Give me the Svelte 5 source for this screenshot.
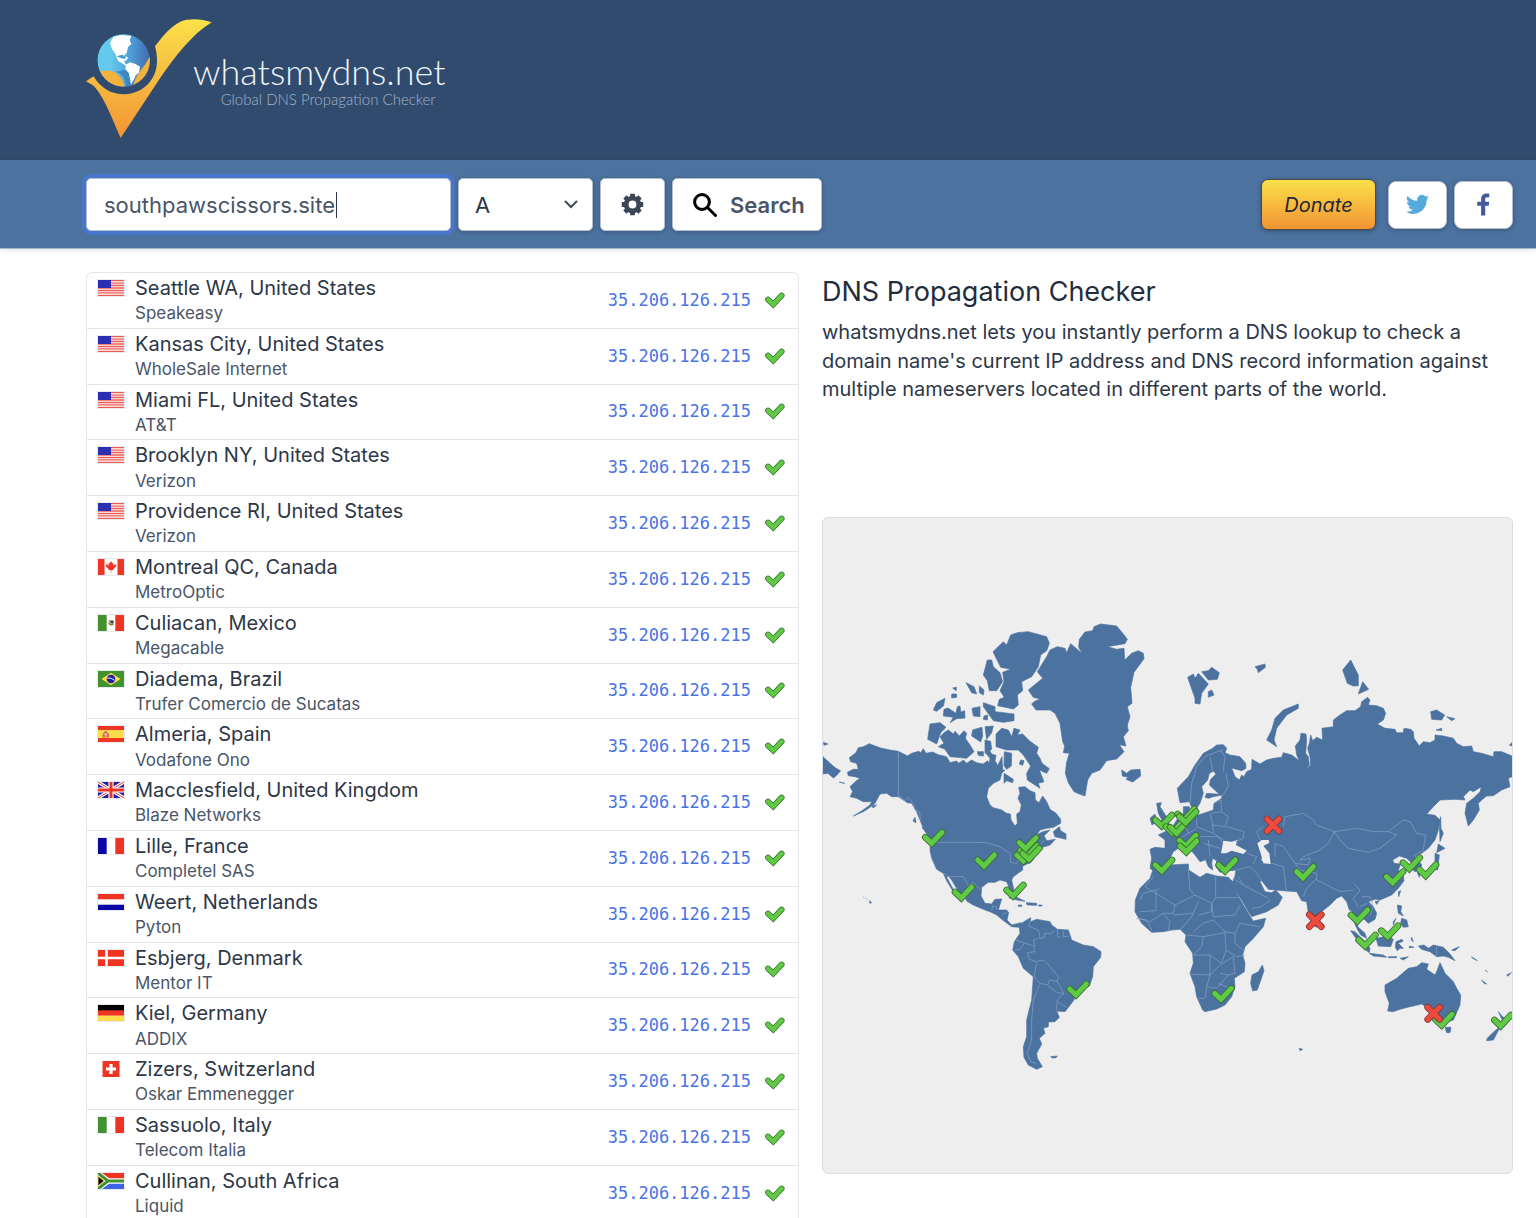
<script>
  const ip = '35.206.126.215';
  const servers = [
    ['us', 'Seattle WA, United States', 'Speakeasy'],
    ['us', 'Kansas City, United States', 'WholeSale Internet'],
    ['us', 'Miami FL, United States', 'AT&T'],
    ['us', 'Brooklyn NY, United States', 'Verizon'],
    ['us', 'Providence RI, United States', 'Verizon'],
    ['ca', 'Montreal QC, Canada', 'MetroOptic'],
    ['mx', 'Culiacan, Mexico', 'Megacable'],
    ['br', 'Diadema, Brazil', 'Trufer Comercio de Sucatas'],
    ['es', 'Almeria, Spain', 'Vodafone Ono'],
    ['gb', 'Macclesfield, United Kingdom', 'Blaze Networks'],
    ['fr', 'Lille, France', 'Completel SAS'],
    ['nl', 'Weert, Netherlands', 'Pyton'],
    ['dk', 'Esbjerg, Denmark', 'Mentor IT'],
    ['de', 'Kiel, Germany', 'ADDIX'],
    ['ch', 'Zizers, Switzerland', 'Oskar Emmenegger'],
    ['it', 'Sassuolo, Italy', 'Telecom Italia'],
    ['za', 'Cullinan, South Africa', 'Liquid']
  ];
  const ticks = [
    [335, 702], [492, 770], [424, 866], [579, 860], [610, 755], [620, 742], [627, 750], [617, 718], [768, 1157],
    [1025, 650], [1057, 670], [1070, 672], [1092, 632], [1097, 640], [1097, 711], [1099, 728], [1025, 785],
    [1215, 785], [1449, 805], [1718, 820], [1768, 778], [1817, 799], [1612, 935], [1703, 982], [1635, 1010],
    [1203, 1170], [1865, 1248], [2042, 1250]
  ];
  const crosses = [[1359, 645], [1486, 932], [1841, 1210]];
  let domain = $state('southpawscissors.site');
</script>

{#snippet flag(code)}
  <svg class="flag" class:square={code === 'ch'} viewBox="0 0 26 16" aria-hidden="true">
    {#if code === 'us'}
      <path fill="#fff" d="M0 0h26v16H0z" />
      <path stroke="#ee5a50" stroke-width="1.3" d="M0 .6h26M0 3.1h26M0 5.5h26M0 8h26M0 10.5h26M0 12.9h26M0 15.4h26" />
      <path fill="#2b2fb0" d="M0 0h13v8H0z" />
    {:else if code === 'ca'}
      <path fill="#fff" d="M0 0h26v16H0z" />
      <path fill="#ee3524" d="M0 0h6.500v16H0zM19.500 0H26v16h-6.500zM13 2l1.300 2.300 1.200-.5-.4 3 1.700-1.500 1.700.6-.5 1.700-2.800 2.700.3 1-2.200-.3v2.500h-.6V11l-2.200.3.3-1L8 7.600l-.5-1.700 1.700-.6 1.700 1.500-.4-3 1.200.5z" />
    {:else if code === 'mx'}
      <path fill="#fff" d="M0 0h26v16H0z" />
      <path fill="#42922f" d="M0 0h8.700v16H0z" /><path fill="#ee3524" d="M17.300 0H26v16h-8.700z" />
      <path fill="none" stroke="#8a7440" stroke-width="1.500" d="M10.500 7.500q2 4 5 1.200M11 5.500l3 2" />
      <circle cx="14" cy="7" r="1.800" fill="#4b4438" />
    {:else if code === 'br'}
      <path fill="#42922f" d="M0 0h26v16H0z" /><path fill="#f9dc4a" d="M13 1.800 22.500 8 13 14.200 3.500 8z" />
      <circle cx="13" cy="8" r="4.300" fill="#1d23a8" /><path fill="none" stroke="#dfe3f4" d="M9 7q4-.8 7.500 2.300" />
    {:else if code === 'es'}
      <path fill="#ee3524" d="M0 0h26v16H0z" /><path fill="#fbdc4b" d="M0 4h26v8H0z" />
      <path fill="#d5734b" d="M4.500 7.500h1v-1h1V5h2.500v1.500h1v1h1v4h-6.500z" /><path stroke="#f3e3d0" stroke-width=".8" d="M6.500 8.500h2.500M7.800 7v4" />
    {:else if code === 'gb'}
      <path fill="#1c1fa5" d="M0 0h26v16H0z" />
      <path stroke="#fff" stroke-width="3.400" d="m0 0 26 16M26 0 0 16" /><path stroke="#ee3524" d="m0 0 26 16M26 0 0 16" />
      <path stroke="#fff" stroke-width="5.200" d="M13 0v16M0 8h26" /><path stroke="#ee3524" stroke-width="3" d="M13 0v16M0 8h26" />
    {:else if code === 'fr'}
      <path fill="#fff" d="M0 0h26v16H0z" /><path fill="#0b07a6" d="M0 0h8.700v16H0z" /><path fill="#ee3524" d="M17.300 0H26v16h-8.700z" />
    {:else if code === 'it'}
      <path fill="#fff" d="M0 0h26v16H0z" /><path fill="#42922f" d="M0 0h8.700v16H0z" /><path fill="#ee3524" d="M17.300 0H26v16h-8.700z" />
    {:else if code === 'nl'}
      <path fill="#fff" d="M0 0h26v16H0z" /><path fill="#ee3524" d="M0 0h26v5.300H0z" /><path fill="#0b07a6" d="M0 10.700h26V16H0z" />
    {:else if code === 'dk'}
      <path fill="#ee3524" d="M0 0h26v16H0z" /><path stroke="#fff" stroke-width="2.600" d="M8.500 0v16M0 8h26" />
    {:else if code === 'de'}
      <path d="M0 0h26v6H0z" /><path fill="#ee3524" d="M0 5.300h26v5.500H0z" /><path fill="#fbdc4b" d="M0 10.700h26V16H0z" />
    {:else if code === 'ch'}
      <path fill="#ee3524" d="M4.500 0h17v16h-17z" /><path stroke="#fff" stroke-width="3.200" d="M13 3v10M8 8h10" />
    {:else}
      <path fill="#fff" d="M0 0h26v16H0z" /><path fill="#ee3524" d="M4 0h22v5.300H11z" /><path fill="#3f63e6" d="M4 16h22v-5.300H11z" />
      <path fill="none" stroke="#42922f" stroke-width="3" d="m0 0 10 8L0 16M10 8h16" />
      <path fill="#000" stroke="#e8bb45" d="M0 3v10l6-5z" />
    {/if}
  </svg>
{/snippet}

<div class="page">
  <header class="brand">
    <a class="logo" href="/" aria-label="whatsmydns.net home">
      <svg class="mark" viewBox="0 0 378 360" aria-hidden="true">
        <defs>
          <linearGradient id="gold" x1="0" y1="0" x2="0" y2="1"><stop offset="0" stop-color="#fbe14a" /><stop offset="1" stop-color="#f29434" /></linearGradient>
          <linearGradient id="sea" x1="0" y1="0" x2="1" y2="0"><stop offset=".25" stop-color="#65c9ee" /><stop offset=".65" stop-color="#4d9dd6" /><stop offset="1" stop-color="#4168ad" /></linearGradient>
          <clipPath id="ball"><circle cx="113" cy="124" r="79" /></clipPath>
        </defs>
        <g transform="translate(-47 -57)">
          <path fill="url(#gold)" d="M47 244 70 229C90 265 126 284 162 283c58-2 98-46 98-100 0-16-2-30-6-44 28-38 52-62 76-74 26-10 61-10 94 2-62 38-110 104-154 166L151 414C120 340 92 274 66 255z" />
        </g>
        <g clip-path="url(#ball)">
          <circle cx="113" cy="124" r="79" fill="url(#sea)" />
          <path fill="#3f86c6" d="M90 158q30 8 30 48h24l4-60z" />
          <path fill="#f3b23c" d="M42 157c34-10 67 7 74 46-34 3-60-16-74-46zM142 200c6-32 32-53 51-90 12 38-5 74-51 90z" />
          <path fill="#fff" d="M72 72 82 53 104 48l32 2-5 13 5 12-10 9-4 18-8 8 12 5-4 9 -8 2 8 16-14-9-11-6-10-24-9-12zM119 137l13-7 15 4 15 9-3 18-10 8-6 14-8 14-3-18-4-18-10-10z" />
          <path fill="#4d9dd6" d="m92 112 16-5 12 6-3 7-12-2z" />
        </g>
      </svg>
      <span class="wording">
        <span class="site">whatsmydns.net</span>
        <span class="tag">Global DNS Propagation Checker</span>
      </span>
    </a>
  </header>

  <div class="bar">
    <form class="lookup" onsubmit={(e) => e.preventDefault()}>
      <label class="domain">
        <input type="text" bind:value={domain} aria-label="Domain name" />
        <i class="caret"></i>
      </label>
      <label class="type">
        <select aria-label="Record type"><option>A</option><option>AAAA</option><option>CNAME</option><option>MX</option></select>
        <svg viewBox="0 0 14 9" aria-hidden="true"><path d="m1.500 1.500 5.500 5.500 5.500-5.500" /></svg>
      </label>
      <button class="cog" type="button" aria-label="Settings">
        <svg viewBox="0 0 24 24" aria-hidden="true"><path class="teeth" d="M12 .8v22.400M.8 12h22.400M4.100 4.100l15.800 15.800M19.900 4.100 4.100 19.900" /><circle class="wheel" cx="12" cy="12" r="6.600" /></svg>
      </button>
      <button class="search" type="submit">
        <svg viewBox="0 0 24 24" aria-hidden="true"><circle cx="9" cy="9" r="7.400" /><path d="m14.500 14.500 8 8" /></svg>
        Search
      </button>
    </form>
    <nav class="social" aria-label="Support and share">
      <a class="donate" href="/donate">Donate</a>
      <a class="share" href="/twitter" aria-label="Twitter">
        <svg viewBox="0 0 24 20" aria-hidden="true"><path fill="#55a9dc" d="M24 2.400a10 10 0 0 1-2.800.8A5 5 0 0 0 23.300.500a10 10 0 0 1-3.100 1.200 4.900 4.900 0 0 0-8.400 4.500A14 14 0 0 1 1.700 1a4.900 4.900 0 0 0 1.500 6.600A5 5 0 0 1 1 7a4.900 4.900 0 0 0 3.900 4.900 5 5 0 0 1-2.200.1 4.900 4.900 0 0 0 4.600 3.400A10 10 0 0 1 0 17.500 14 14 0 0 0 21.500 5z" /></svg>
      </a>
      <a class="share" href="/facebook" aria-label="Facebook">
        <svg viewBox="0 0 24 24" aria-hidden="true"><path fill="#435b9d" d="M9.500 23.500V13.300H5.500V9h4V6.500C9.500 2.700 11.700.5 15 .5c1.300 0 2.500.1 3 .2v3.700h-2c-1.900 0-2.200.9-2.200 2.300V9h4.200l-.6 4.300h-3.600v10.200z" /></svg>
      </a>
    </nav>
  </div>

  <main>
    <div class="results">
      <table aria-label="DNS results">
        <tbody>
          {#each servers as [code, place, provider]}
            <tr>
              <td class="country">{@render flag(code)}</td>
              <td class="server"><div class="place">{place}</div><div class="provider">{provider}</div></td>
              <td class="answer"><a href="/ip">{ip}</a></td>
              <td class="status"><svg viewBox="-32 -46 76 61" role="img" aria-label="Resolved"><path class="rim" d="M-18-17 0 0l29-31" /><path class="tick" d="M-18-17 0 0l29-31" /></svg></td>
            </tr>
          {/each}
        </tbody>
      </table>
    </div>

    <section class="info">
      <h1>DNS Propagation Checker</h1>
      <p>whatsmydns.net lets you instantly perform a DNS lookup to check a domain name's current IP address and DNS record information against multiple nameservers located in different parts of the world.</p>
      <div class="map">
        <svg viewBox="9 -276 2067 1965" role="img" aria-label="World map of results">
          <g class="land">
            <!-- North and Central America -->
            <path d="M88 443 108 428 115 413 130 410 148 401 168 409 182 414 210 420 235 424 262 438 275 430 296 424 302 428 310 416 318 430 338 426 355 434 380 440 390 458 410 453 416 460 430 450 440 460 455 450 470 458 490 462 503 452 508 460 510 445 498 430 508 420 515 432 528 436 525 452 533 467 546 440 548 480 555 480 545 490 540 510 520 520 505 535 500 560 510 585 520 593 545 600 560 610 571 612 573 630 585 648 592 640 590 612 600 605 604 585 594 565 600 550 596 532 615 530 630 542 645 548 646 570 657 578 668 558 680 575 690 598 708 610 722 628 722 640 700 652 680 655 660 660 650 675 668 665 690 660 672 677 680 692 706 688 690 705 668 712 650 735 634 756 608 768 608 780 580 800 575 810 582 842 574 848 566 830 560 815 540 810 525 817 505 817 485 832 483 858 495 880 515 882 525 868 545 867 535 900 560 900 566 908 561 930 575 945 603 938 600 952 575 950 548 930 530 915 510 905 495 900 460 885 440 873 435 862 420 850 408 832 395 810 385 798 380 802 404 846 398 842 380 812 370 790 350 778 335 745 330 720 332 690 310 655 298 625 290 605 275 580 262 578 235 560 215 560 200 550 180 552 165 580 150 592 130 605 100 618 125 603 150 585 155 575 130 575 110 565 90 560 98 545 90 530 112 510 120 505 105 500 85 497 82 487 100 478 115 478 110 460 92 455z" />
            <path d="M625 240 668 205 652 185 680 140 690 120 712 110 735 115 740 128 752 101 786 130 776 112 778 88 795 66 818 62 822 50 842 42 890 48 910 72 922 88 915 101 862 110 890 118 912 115 914 150 935 130 955 122 970 130 972 146 942 187 932 232 936 280 922 290 930 320 922 345 925 362 910 380 918 408 898 404 912 425 890 447 860 452 840 480 815 490 803 510 795 558 778 552 762 545 745 518 736 490 740 456 748 430 730 428 734 408 728 395 720 340 705 310 690 300 648 300 635 282 642 275 660 267 640 262z" />
            <path d="M519 125 550 95 560 105 572 75 592 68 625 65 680 80 688 100 680 122 662 135 655 170 635 200 605 215 608 242 592 255 595 285 580 297 533 287 538 268 553 262 540 242 552 215 548 187 572 178 542 172zM502 150 515 150 520 170 540 188 548 215 530 242 508 242 502 212 490 195zM438 218 462 230 470 252 455 248zM478 228 492 240 490 255 478 248zM398 234 410 232 408 242zM395 252 410 252 410 262 395 264zM340 300 350 278 375 265 370 288 350 304zM372 298 384 294 408 310 412 290 420 288 422 306 434 302 435 324 410 326 390 338 400 322 370 318zM456 295 480 290 480 320 460 318zM490 278 525 290 525 305 582 312 582 332 550 337 520 332 490 290zM492 318 503 315 502 330 490 328zM330 342 360 338 378 352 362 368 350 402 323 388zM360 380 372 368 385 360 400 372 405 364 418 378 432 362 440 370 436 385 450 405 462 425 440 445 410 442 390 440 375 418 355 410 372 400zM458 360 470 356 486 352 488 378 482 396 470 388 455 378zM495 350 520 348 515 368 500 388zM495 390 512 394 515 418 495 430zM472 425 490 425 490 438 475 436zM528 372 545 355 565 360 575 380 582 355 600 360 592 375 608 372 628 392 655 412 650 430 660 445 666 460 688 476 680 490 658 480 672 515 655 520 660 535 622 510 620 490 632 468 610 435 595 420 560 420 528 410zM553 425 575 430 574 468 560 478 552 468zM602 450 612 452 608 466 598 462zM552 490 580 508 578 518 560 512 552 520zM700 665 718 650 722 662 738 672 738 688 705 680zM905 480 920 490 932 480 960 478 962 498 938 516 918 508 925 502 907 498zM9 440 36 465 48 475 62 482 48 498 40 504 24 490 9 492zM10 397 24 402 12 406zM58 516 74 520zM285 622 288 638 279 633zM306 652 330 664 338 680 320 670zM155 588 170 584 160 594z" />
          </g>
          <g class="border"><path d="M235 424V557L255 572 265 562 280 580 285 600 298 605 302 628M338 697H476L500 698 540 710 570 730 572 758 590 760 600 740 660 708 672 690M372 790 385 800H430L445 825 460 818 480 838M515 900 518 888 530 890 530 900M545 915 560 906" /></g>

          <!-- Caribbean, Hawaii and South America -->
          <g transform="translate(0 630)">
            <g class="land">
              <path d="M597 314 632 293 632 305 650 298 690 305 695 315 712 328 745 330 755 360 790 375 820 380 843 395 842 412 820 440 818 470 808 498 790 507 768 518 762 540 735 575 710 573 718 592 705 605 685 606 685 620 670 625 675 640 658 655 665 672 650 700 652 715 667 740 650 748 625 735 612 712 610 680 620 650 620 600 635 540 640 470 610 445 595 410 578 390 583 365 600 340z" />
              <path d="M566 233 590 232 615 244 595 241zM618 248 650 250 650 256 622 255zM595 255h10v4h-10zM656 255h10v3h-10zM692 710 712 708 708 713 696 714zM148 242 155 248 150 250z" />
            </g>
            <path class="border" d="M128 232h5M136 236h6M632 300 625 318 655 330 660 356 675 350 672 340 695 340 705 330M712 328 712 350 722 352M730 332 730 350 745 348M655 355 640 360 645 380 612 368 585 360M612 370 600 388 585 390M640 382 645 395 622 398 628 418 648 425 670 420 690 440 715 470 712 485 688 480 684 495 658 490 642 468 650 430M658 495 640 540 635 600 635 660 622 700 632 725 648 730M712 485 732 520 712 540 710 570M684 498 712 518 732 520M712 545 740 562" />
          </g>

          <!-- Europe and Asia -->
          <g transform="translate(960 90)">
            <g class="land">
              <path d="M112 445 145 410 165 375 190 340 218 325 230 315 250 314 260 325 255 338 270 345 300 350 317 370 318 385 305 392 275 384 285 410 298 420 305 405 312 410 320 395 335 388 336 358 348 365 360 372 380 360 400 355 425 352 430 338 455 345 478 362 470 345 466 318 480 300 483 280 498 282 500 300 497 340 505 350 508 375 495 390 512 375 510 350 503 325 508 310 512 285 518 302 530 292 548 300 546 265 580 260 580 240 600 225 620 212 645 212 662 200 665 185 683 172 690 180 685 195 710 197 730 205 737 220 730 240 712 252 735 265 765 268 770 278 790 278 792 265 812 268 820 275 822 295 838 318 850 305 870 308 885 300 885 285 910 288 940 295 950 310 970 320 995 318 1000 335 1025 340 1060 350 1062 335 1085 335 1116 348V410L1105 415 1110 440 1085 450 1060 467 1040 468 1025 480 1015 490 1018 510 1000 540 985 558 975 520 980 490 1000 475 1020 455 1024 440 1000 455 990 450 970 470 975 480 945 478 900 480 880 500 860 522 885 526 900 540 895 570 885 600 865 625 845 640 825 650 835 660 845 675 842 690 825 695 812 685 818 672 800 655 778 648 758 660 762 670 782 672 775 690 790 705 792 722 775 745 755 765 720 780 705 778 685 785 700 800 710 820 705 838 685 850 675 840 655 825 648 845 655 862 675 880 680 895 662 885 648 860 640 840 635 812 628 810 620 785 605 768 590 775 570 795 545 815 540 840 530 862 518 855 505 820 500 785 485 782 470 755 440 753 385 748 365 722 360 725 375 755 395 758 407 750 427 772 415 795 380 815 335 830 325 815 305 780 285 750 278 725 285 708 288 690 270 692 240 697 228 680 230 662 218 655 215 670 218 690 205 680 195 655 180 635 165 620 190 645 195 660 180 665 165 645 145 622 125 610 115 625 100 635 90 655 82 680 60 695 40 692 30 685 35 655 30 628 45 622 75 625 75 600 55 585 75 575 95 565 110 540 130 520 130 500 148 500 150 520 175 525 205 515 220 510 222 490 245 475 246 465 220 470 205 475 195 472 200 460 238 463 208 435 212 418 228 402 220 394 208 400 203 420 185 440 190 460 180 490 170 505 160 515 148 485 120 488z" />
              <path d="M143 112 160 102 165 115 175 100 205 132 185 160 180 192 165 190 165 175zM185 95 205 92 215 82 238 98 232 118 205 120zM205 155 215 150 222 165 205 172zM345 80 375 72 376 82 355 98 352 88zM608 90 632 60 655 105 655 137 640 138 622 130zM655 162 668 125 686 148zM872 215 890 210 914 225 905 240 875 238zM920 230 945 236 935 242zM888 270 905 265 905 272zM380 300 395 270 405 235 430 210 475 192 475 205 440 225 410 265 402 300 410 320zM50 490 64 488 60 500 70 515 85 540 88 558 68 560 55 550 66 540 55 520zM30 535 45 522 50 545 36 555zM902 530 903 565 910 580 900 605 898 545zM895 612 915 625 890 638zM885 640 898 645 893 690 870 680 885 665zM832 698 842 695 838 712zM1108 315 1116 308V318z" />
            </g>
            <path class="sea" d="M243 640 250 602 275 605 292 600 288 615 320 632 310 642 275 632 258 640zM352 610 365 600 386 600 388 608 370 618 388 640 392 672 370 670 362 640zM365 655h6v8h-6z" />
            <path class="border" d="M150 490 155 430 170 380 195 350 220 340 232 335 250 330M218 395 210 350M250 395 255 350 240 330M258 400 265 440 245 470M222 490 243 480 245 515 215 520M245 515 265 530 255 560 215 555M170 535 170 560 200 572 220 580 218 550 210 520M260 560 312 575 310 595 285 605M220 580 250 600M180 590 235 590 250 612M190 610 240 625M205 600 210 650M130 540 145 580 110 600M145 580 170 565M360 600 350 575 370 560M430 560 435 530 490 520 520 540 530 555 583 575 650 565 700 575 745 575 770 585 720 625 685 637 625 625 600 600 583 575M745 575 790 540 810 545 830 580 857 585 850 630 820 648M583 575 565 610 540 630 490 650 480 660 510 655 505 675 465 670 430 620 405 610 405 650M465 670 480 690 530 700 530 720 560 735 600 755 640 750M530 715 500 745 490 770M395 670 430 680 440 755M320 640 350 650 340 672M290 690 330 680 350 700 365 722M295 710 310 735 385 775M310 735 280 715M640 730 660 750 640 775 655 800M665 770 690 770 700 800 690 825M660 800 680 790" />
          </g>

          <!-- Africa, South-East Asia and Oceania -->
          <g transform="translate(900 690)">
            <g class="land">
              <path d="M100 86 125 87 150 75 205 72 206 90 240 112 260 100 290 108 325 112 338 125 350 160 370 195 392 232 400 243 437 235 430 260 400 295 375 320 368 345 375 370 373 395 343 415 345 440 335 470 315 495 290 507 255 515 248 510 230 470 225 440 210 400 220 370 218 340 195 305 198 285 180 268 155 270 130 275 95 277 65 250 45 215 46 180 60 145 90 115zM427 375 432 392 412 450 398 453 392 430 396 405 415 395z" />
              <path d="M795 435 830 415 865 385 890 380 905 368 925 372 920 388 945 405 952 390 960 368 975 400 1000 425 1010 445 1022 465 1020 495 1000 540 970 550 950 540 935 512 905 492 870 500 840 508 820 515 803 513 808 490 795 455zM975 562 993 562 990 578 980 578zM1140 562 1120 600 1100 602 1102 594 1130 568zM1135 515 1148 530 1160 540 1150 560 1144 555 1146 538zM692 272 705 275 735 305 750 325 748 338 725 320zM748 340 790 345 800 352 760 348zM768 295 785 292 800 285 820 298 812 320 775 318zM828 305 845 298 850 303 835 310 850 325 840 325 832 332 826 322zM895 318 912 315 925 325 940 315 970 322 990 342 1005 362 985 352 970 348 950 350 930 335 905 328zM805 350h25v3h-25zM840 355 865 350 850 360zM875 292 880 305 874 300zM868 318 882 322 868 323zM832 195 845 198 842 215 850 228 835 220zM845 235 860 240 865 260 850 262 842 250zM835 155 842 152 836 170zM765 185 778 182 770 193zM820 245 828 235 820 255zM1085 420 1100 432 1092 430zM1095 390 1102 396zM1160 405 1174 398 1164 409zM1055 350 1072 362 1058 355zM995 330 1018 320 1005 332zM538 625 548 628 540 632z" />
            </g>
            <path class="border" d="M60 180 70 160 108 150 108 212 60 215M100 110 75 140 165 195 225 165 210 150 205 90M108 150 118 145M287 110V173H355M225 165 275 190 287 173M165 195 160 220 130 220 90 245 55 235M130 220 150 245 145 270M160 225 220 220 235 185M180 270 215 230 220 220M235 225 275 215 275 190M275 190 280 230 345 225 360 195M220 275 250 250 280 240 315 275 345 280 360 250 420 260M345 280 345 310 370 330M200 285 250 290 245 320 220 345M250 290 315 278 318 330 305 370 270 345 220 345M318 330 350 350 375 345M270 345 270 405 210 403M270 405 300 375 340 350 345 400M270 405 260 440 255 475 235 475M260 440 290 445 325 405 345 400M295 430 330 445M325 405 300 400M48 235 80 240 95 270M395 205 425 200 450 180M950 320V350" />
          </g>

          {#each ticks as [x, y]}
            <g transform="translate({x} {y})"><path class="rim" d="M-19-20 0-2l31-33" /><path class="tick" d="M-19-20 0-2l31-33" /></g>
          {/each}
          {#each crosses as [x, y]}
            <g transform="translate({x} {y})"><path class="rim cross-rim" d="m-18-18 36 36m0-36-36 36" /><path class="cross" d="m-18-18 36 36m0-36-36 36" /></g>
          {/each}
        </svg>
      </div>
    </section>
  </main>
</div>

<style>
  :global(body) { margin: 0; background: #fff; font-family: Inter, "Liberation Sans", sans-serif; color: #2d3748; }
  :global(html) { scrollbar-width: none; }
  * { box-sizing: border-box; }
  svg { display: block; }

  .brand { background: #304b6d; padding: 19px 23px 21px 86px; }
  .logo { display: inline-flex; vertical-align: top; color: #eff4f9; text-decoration: none; }
  .mark { width: 126px; height: 120px; flex: none; }
  .wording { display: flex; flex-direction: column; align-items: flex-end; margin-left: -19px; padding: 32px 0 0; font-family: Lato, sans-serif; font-weight: 300; }
  .site { font-size: 36px; line-height: 40px; }
  .tag { font-size: 15px; line-height: 16px; padding-right: 10px; color: #a3b4c9; }

  .bar { display: flex; justify-content: space-between; align-items: center; background: #4c72a0; border-bottom: 1px solid #a5b7cf; box-shadow: 0 1px 4px rgb(0 0 0 / 12%); padding: 18px 23px 17px 86px; }
  .lookup { display: flex; gap: 7px; }
  .domain, .type { position: relative; display: block; }
  input, select, .cog, .search, .share {
    font-family: inherit; color: #4a5568; background: #fff; border: 1px solid #b5bfcc; border-radius: 5px; box-shadow: 0 1px 4px rgb(0 0 0 / 25%);
  }
  input, select, .cog, .search { height: 53px; margin: 0; }
  input { width: 365px; padding: 0 17px; font-size: 22px; outline: none; box-shadow: 0 0 0 4px #4876cc; }
  .caret { position: absolute; left: 250px; top: 14px; width: 1px; height: 26px; background: #2d3748; }
  select { appearance: none; width: 135px; padding: 0 16px; font-size: 22px; color: #2d3748; }
  .type svg { position: absolute; right: 15px; top: 22px; width: 14px; height: 9px; fill: none; stroke: #3e4a5b; stroke-width: 2; stroke-linecap: round; }
  .cog { width: 65px; padding: 0; display: grid; place-items: center; }
  .cog svg { width: 23px; height: 23px; fill: none; stroke: #3b4656; }
  .teeth { stroke-width: 5; stroke-dasharray: 6 11 6; }
  .wheel { stroke-width: 5; }
  .search { display: flex; align-items: center; gap: 13px; padding: 0 16px 0 20px; font-size: 22px; font-weight: 600; }
  .search svg { width: 24px; height: 24px; fill: none; stroke: #000; stroke-width: 3; stroke-linecap: round; }
  .social { display: flex; align-items: center; gap: 7px; }
  .donate { display: grid; place-items: center; width: 115px; height: 51px; margin-right: 5px; border: 1px solid #4a4a42; border-radius: 7px; background: linear-gradient(#fbe04a, #f29434); box-shadow: 0 1px 4px rgb(0 0 0 / 30%); color: #1f2733; font-size: 20px; font-style: italic; text-decoration: none; }
  .share { display: grid; place-items: center; width: 59px; height: 48px; border-radius: 8px; }
  .share svg { width: 23px; height: 23px; }

  main { display: grid; grid-template-columns: minmax(0, 713fr) minmax(0, 691fr); gap: 23px; align-items: start; padding: 23px 23px 0 86px; }
  .results { border: 1px solid #e2e5ea; border-bottom: 0; border-radius: 6px 6px 0 0; }
  table { width: 100%; border-collapse: separate; border-spacing: 0; }
  tr + tr td { border-top: 1px solid #e2e5ea; }
  td { padding: 2px 0 3px; vertical-align: middle; }
  .country { width: 48px; padding-left: 11px; padding-top: 7px; vertical-align: top; }
  .flag { width: 26px; height: 16px; outline: 1px solid #e8eaee; }
  .flag.square { outline: 0; }
  .place { font-size: 20px; line-height: 1.36; }
  .provider { font-size: 17px; line-height: 1.33; color: #4a5568; }
  .answer { text-align: right; font: 17px "DejaVu Sans Mono", monospace; }
  .answer a { color: #4a73e8; text-decoration: none; }
  .status { width: 47px; padding-left: 13px; }
  .status svg { width: 22px; height: 18px; }

  h1 { margin: 2px 0 8px; font-size: 27px; line-height: 36px; font-weight: 400; color: #232c3b; }
  p { margin: 0; font-size: 20px; line-height: 1.43; }
  .map { margin-top: 113px; overflow: hidden; background: #eeeeee; border: 1px solid #dcdddf; border-radius: 6px; }
  .map svg { width: 100%; height: auto; }
  .land { fill: #4c72a0; stroke: #4c72a0; stroke-width: 2; stroke-linejoin: round; }
  .sea { fill: #eeeeee; }
  .border { fill: none; stroke: #8aa5c8; stroke-width: 2; stroke-linejoin: round; }
  .rim, .tick, .cross { fill: none; stroke-linecap: round; stroke-linejoin: miter; }
  .rim { stroke: #3b6b34; stroke-width: 20; }
  .tick { stroke: #5fca44; stroke-width: 15; }
  .cross-rim { stroke: #7d3a35; stroke-width: 20; }
  .cross { stroke: #ee4b3e; stroke-width: 15; }
</style>
